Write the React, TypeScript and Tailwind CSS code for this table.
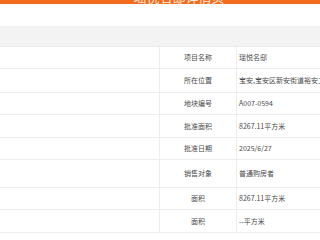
const rows: { label: string; value: string; h: string }[] = [
  { label: "项目名称", value: "瑶悦名邸", h: "h-[22px]" },
  { label: "所在位置", value: "宝安,宝安区新安街道裕安二路", h: "h-[24px]" },
  { label: "地块编号", value: "A007-0594", h: "h-[22px]" },
  { label: "批准面积", value: "8267.11平方米", h: "h-[23px]" },
  { label: "批准日期", value: "2025/6/27", h: "h-[22px]" },
  { label: "销售对象", value: "普通购房者", h: "h-[28px]" },
  { label: "面积", value: "8267.11平方米", h: "h-[22px]" },
  { label: "面积", value: "--平方米", h: "h-[23px]" },
];

export default function App() {
  return (
    <div
      className="w-[320px] h-[240px] overflow-hidden bg-white text-[#4a4a4a]"
      style={{ fontFamily: '"Noto Sans CJK SC", "Noto Sans", sans-serif' }}
    >
      {/* header bar, title mostly scrolled out of view */}
      <div className="h-[4px] bg-[#f36b1f] overflow-hidden">
        <div className="-mt-[11px] h-[15px] pl-[38px] text-center text-[#fde3d2] text-[13px] leading-[15px]">
          瑶悦名邸详情页
        </div>
      </div>
      <div className="h-[22px]" />
      <div className="h-[21px] bg-[#f3f3f3] border-b border-[#ececec]" />
      {rows.map((r, i) => (
        <div
          key={i}
          className={`grid grid-cols-[160px_77px_1fr] border-b border-[#ededed] ${r.h}`}
        >
          <div className="border-r border-[#ededed]" />
          <div className="border-r border-[#ededed] flex items-center justify-center text-[7px]">
            {r.label}
          </div>
          <div className="flex items-center pl-[2px] text-[7px] whitespace-nowrap overflow-hidden">
            {r.value}
          </div>
        </div>
      ))}
    </div>
  );
}
